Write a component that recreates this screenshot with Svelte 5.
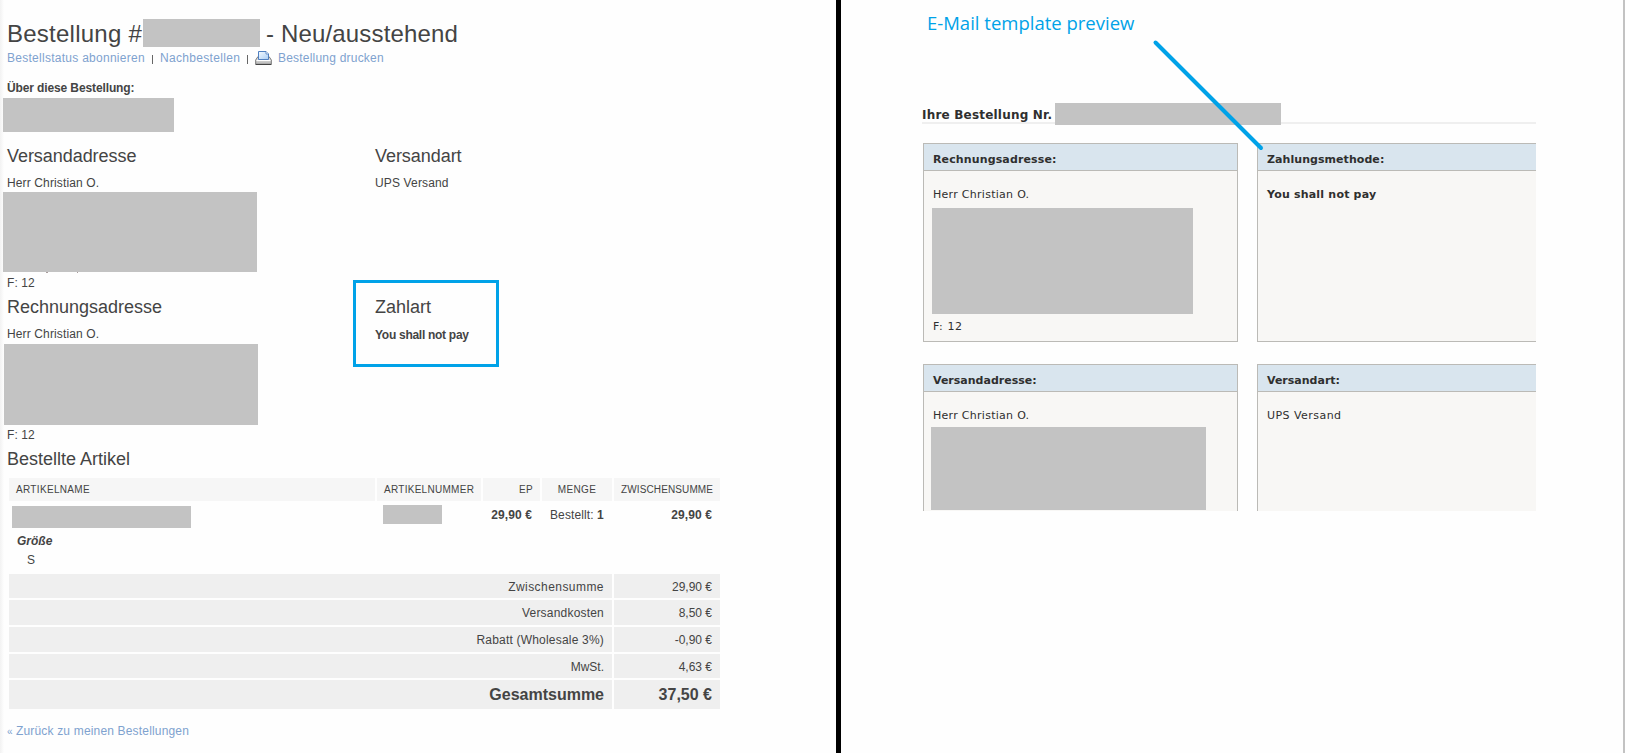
<script>
  const totals = [
    { label: 'Zwischensumme', value: '29,90 €', cls: 't1' },
    { label: 'Versandkosten', value: '8,50 €', cls: 't2' },
    { label: 'Rabatt (Wholesale 3%)', value: '-0,90 €', cls: 't3' },
    { label: 'MwSt.', value: '4,63 €', cls: 't4' },
    { label: 'Gesamtsumme', value: '37,50 €', cls: 't5' }
  ];
</script>

<div class="page">
  <section class="shop">
    <h1>
      <span class="order">Bestellung #</span><span class="mask m-order"></span><span class="state">- Neu/ausstehend</span>
    </h1>
    <nav>
      <a class="l1">Bestellstatus abonnieren</a><i class="bar b1"></i>
      <a class="l2">Nachbestellen</a><i class="bar b2"></i>
      <svg class="printer" width="17" height="15" viewBox="0 0 17 15">
        <defs>
          <linearGradient id="tray" x1="0" y1="0" x2="0" y2="1">
            <stop offset="0" stop-color="#f4f4f4" /><stop offset="1" stop-color="#b4b4b4" />
          </linearGradient>
          <linearGradient id="paper" x1="0" y1="0" x2="1" y2="1">
            <stop offset="0" stop-color="#f5fbff" /><stop offset="1" stop-color="#a9cdf5" />
          </linearGradient>
        </defs>
        <path d="M3 5.5 .7 9v4.3h15.6V9L14 5.500Z" fill="url(#tray)" stroke="#777" />
        <path d="M3.500 8.500v-8h7.500l2.500 2.500v5.500Z" fill="url(#paper)" stroke="#4f7fc0" />
        <path d="M11 .5v2.500h2.500" fill="#fff" stroke="#4f7fc0" stroke-width=".8" />
        <path d="M1.500 9.500h14" stroke="#fff" />
        <path d="M.7 13.500h15.600" stroke="#444" />
      </svg>
      <a class="l3">Bestellung drucken</a>
    </nav>
    <p class="about">Über diese Bestellung:</p>
    <div class="mask m-about"></div>

    <div class="pair first">
      <div class="address">
        <h2 class="va">Versandadresse</h2>
        <p class="name">Herr Christian O.</p>
        <div class="mask m-ship"></div>
        <p class="fax">F: 12</p>
      </div>
      <div>
        <h2 class="va">Versandart</h2>
        <p class="ups">UPS Versand</p>
      </div>
    </div>
    <div class="pair second">
      <div class="address">
        <h2>Rechnungsadresse</h2>
        <p class="name">Herr Christian O.</p>
        <div class="mask m-bill"></div>
        <p class="fax">F: 12</p>
      </div>
      <div class="pay">
        <h2>Zahlart</h2>
        <p class="method">You shall not pay</p>
        <div class="highlight"></div>
      </div>
    </div>

    <h2 class="items">Bestellte Artikel</h2>
    <div class="table">
      <div class="row head">
        <span class="h1c">ARTIKELNAME</span>
        <span class="h2c">ARTIKELNUMMER</span>
        <span class="right">EP</span>
        <span class="center">MENGE</span>
        <span class="h5c">ZWISCHENSUMME</span>
      </div>
      <div class="row item">
        <div class="product">
          <div class="mask m-product"></div>
          <p class="option">Größe</p>
          <p class="size">S</p>
        </div>
        <div><div class="mask m-sku"></div></div>
        <b class="right">29,90 €</b>
        <span class="qty">Bestellt: <b>1</b></span>
        <b class="right last">29,90 €</b>
      </div>
      {#each totals as t}
        <div class="total {t.cls}"><span class="label">{t.label}</span><span class="value">{t.value}</span></div>
      {/each}
    </div>
    <a class="back"><small>«</small>Zurück zu meinen Bestellungen</a>
  </section>

  <section class="mail">
    <p class="caption">E-Mail template preview</p>
    <div class="preview">
      <h3><span>Ihre Bestellung Nr.</span><span class="mask m-nr"></span></h3>
      <div class="cards">
        <div class="card">
          <h4 class="ra">Rechnungsadresse:</h4>
          <p class="herr">Herr Christian O.</p>
          <div class="mask m-c1"></div>
          <p class="f12">F: 12</p>
        </div>
        <div class="card">
          <h4 class="zm">Zahlungsmethode:</h4>
          <p class="shall">You shall not pay</p>
        </div>
        <div class="card">
          <h4>Versandadresse:</h4>
          <p class="herr">Herr Christian O.</p>
          <div class="mask m-c2"></div>
        </div>
        <div class="card">
          <h4>Versandart:</h4>
          <p class="upsv">UPS Versand</p>
        </div>
      </div>
    </div>
    <svg class="pointer" width="112" height="114" viewBox="0 0 112 114">
      <path d="M3.500 4.500 109 110" stroke="#00a2e8" stroke-width="4" stroke-linecap="round" />
    </svg>
  </section>
</div>

<style>
  :global(body) { background: #fefefe; }
  * { box-sizing: border-box; }
  h1, h2, h3, h4, p { margin: 0; font-weight: normal; }
  .page { display: flex; width: 1625px; height: 753px; overflow: hidden; }
  .mask { display: block; background: #c3c3c3; }

  .shop {
    width: 836px; padding: 19px 0 0 7px; flex: none;
    font: 12px/16px "Liberation Sans", Arial, sans-serif; color: #444;
    background: linear-gradient(90deg, #f2f2f2, #fefefe 4px);
  }
  h1 { display: flex; height: 28px; font-size: 24px; line-height: 29px; white-space: nowrap; }
  .order { width: 136px; letter-spacing: .24px; }
  .m-order { width: 117px; height: 28px; margin-right: 6px; }
  .state { letter-spacing: .16px; }
  nav { display: flex; height: 16px; margin-top: 3px; white-space: nowrap; }
  a { color: #7fa2cf; }
  .l1 { width: 145px; letter-spacing: .27px; }
  .l2 { width: 87px; letter-spacing: .32px; }
  .l3 { margin-left: 6px; letter-spacing: .21px; }
  .bar { width: 1px; height: 9px; margin-top: 5px; background: #666; }
  .b1 { margin-right: 7px; }
  .b2 { margin-right: 7px; }
  .printer { margin-top: 1px; }
  .about { margin-top: 14px; font-weight: bold; letter-spacing: -.12px; }
  .m-about { width: 171px; height: 34px; margin: 2px 0 0 -4px; }

  .pair { display: flex; }
  .address { width: 368px; }
  .first { height: 159px; padding-top: 14px; }
  .second { height: 152px; padding-top: 6px; }
  h2 { height: 20px; font-size: 18px; line-height: 20px; }
  .va { letter-spacing: -.05px; }
  .name { margin-top: 9px; letter-spacing: .13px; }
  .ups { margin-top: 9px; letter-spacing: .15px; }
  .fax { letter-spacing: .1px; margin-top: 3px; }
  .m-ship { position: relative; width: 254px; height: 80px; margin: 1px 0 0 -4px; }
  .m-ship::before, .m-ship::after { content: ""; position: absolute; top: 80px; left: 43px; width: 2px; height: 1px; background: #a89c9c; }
  .m-ship::after { left: 74px; width: 1px; }
  .m-bill { width: 254px; height: 81px; margin: 2px 0 0 -3px; }
  .second .fax { margin-top: 2px; }
  .pay { position: relative; }
  .method { margin-top: 10px; font-weight: bold; letter-spacing: -.28px; }
  .highlight { position: absolute; left: -22px; top: -17px; width: 146px; height: 87px; border: 3px solid #00a2e8; }

  .items { margin-top: 6px; }
  .table { width: 711px; margin: 9px 0 0 2px; }
  .row { display: grid; grid-template-columns: 366px 104px 57px 70px 106px; gap: 2px; }
  .head { height: 23px; font-size: 10px; line-height: 23px; }
  .head span { background: #f6f6f6; padding: 0 7px; white-space: nowrap; letter-spacing: .33px; }
  .head .h2c { letter-spacing: .28px; }
  .head .h5c { letter-spacing: .12px; }
  .right { text-align: right; padding-right: 7px; }
  .center { text-align: center; }
  .item { height: 73px; padding-top: 6px; letter-spacing: .1px; }
  .item > .right { padding-right: 8px; }
  .m-product { width: 179px; height: 22px; margin: -1px 0 0 3px; }
  .m-sku { width: 59px; height: 19px; margin: -2px 0 0 6px; }
  .option { margin: 5px 0 0 8px; font-style: italic; font-weight: bold; letter-spacing: 0; }
  .size { margin: 3px 0 0 18px; }
  .qty { padding-left: 8px; white-space: nowrap; letter-spacing: .1px; }
  .item > div { margin-top: -2px; padding-top: 2px; display: flow-root; }
  .total { display: grid; grid-template-columns: 603px 106px; gap: 2px; height: 25px; margin-bottom: 2px; text-align: right; }
  .total span { background: #efefef; padding: 5px 8px 0 0; }
  .total.t1, .total.t4 { height: 24px; }
  .t1 .label { letter-spacing: .45px; }
  .t2 .label, .t3 .label { letter-spacing: .2px; }
  .total.t5 { height: 29px; margin: 0; font-size: 16px; font-weight: bold; }
  .total.t5 span { padding-top: 7px; }
  .back { display: flex; margin-top: 14px; letter-spacing: .17px; }
  .back small { width: 9px; padding: 1px 0 0 0; font-size: 10px; }

  .mail {
    position: relative; width: 789px; padding: 11px 0 0 81px;
    border-left: 5px solid #000; border-right: 2px solid #c3c3c3;
    font: 11px/14px "DejaVu Sans", Verdana, sans-serif; color: #2f2f2f;
  }
  .caption { height: 24px; margin-left: 5px; font: 18.5px/24px "Open Sans", sans-serif; color: #00a2e8; }
  .preview { width: 614px; height: 408px; margin-top: 68px; overflow: hidden; }
  h3 { display: flex; align-items: flex-start; height: 21px; border-bottom: 2px solid #efefef; font-size: 12px; line-height: 24px; font-weight: bold; letter-spacing: .2px; }
  h3 span:first-child { width: 133px; white-space: nowrap; }
  .m-nr { width: 226px; height: 22px; flex: none; }
  .cards { display: grid; grid-template-columns: 315px 315px; grid-template-rows: 199px 199px; gap: 22px 19px; margin: 19px 0 0 1px; }
  .card { border: 1px solid #bbbab6; background: #f8f7f5; }
  h4 { height: 27px; padding: 2px 0 0 9px; border-bottom: 1px solid #bbbab6; background: #d9e5ee; line-height: 27px; font-size: 11px; font-weight: bold; letter-spacing: 0; }
  .ra { letter-spacing: .13px; }
  .zm { letter-spacing: .06px; }
  .card p { margin: 17px 0 0 9px; }
  .herr { letter-spacing: .28px; }
  .shall { font-weight: bold; letter-spacing: .2px; }
  .upsv { letter-spacing: .45px; }
  .m-c1 { width: 261px; height: 106px; margin: 6px 0 0 8px; }
  .m-c2 { width: 275px; height: 83px; margin: 4px 0 0 7px; }
  .card .f12 { margin-top: 6px; letter-spacing: .6px; }
  .pointer { position: absolute; left: 311px; top: 38px; fill: none; }
</style>
